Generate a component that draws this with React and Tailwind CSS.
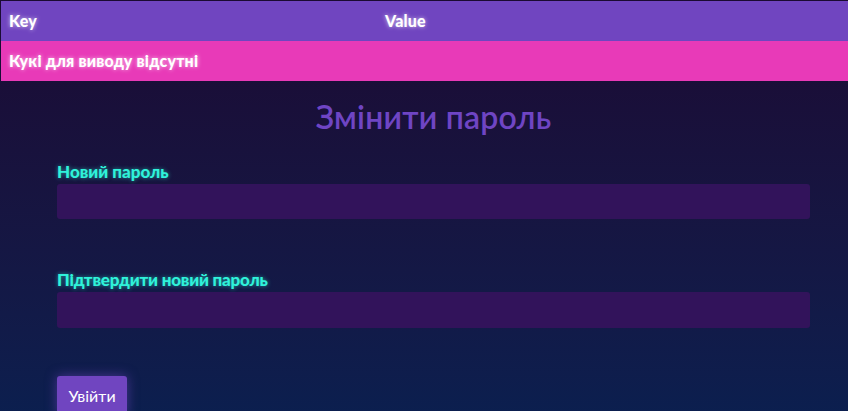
export default function App() {
  return (
    <div className="min-h-screen bg-gradient-to-b from-[#1b0a33] to-[#0b1f4f] font-['Lato','Noto_Sans',sans-serif] pt-px pl-px">
      <table className="w-full border-collapse text-white font-black text-[16px] tracking-[0.2px] [text-shadow:0_0_4px_rgba(255,255,255,0.7)]">
        <thead>
          <tr className="bg-[#7045c0] h-10">
            <th className="w-[376px] text-left px-2 font-black">Key</th>
            <th className="text-left px-2 font-black">Value</th>
          </tr>
        </thead>
        <tbody>
          <tr className="bg-[#e83ab8] h-10">
            <td colSpan={2} className="px-2">Кукі для виводу відсутні</td>
          </tr>
        </tbody>
      </table>

      <div className="ml-[56px] w-[753px] pt-[12px]">
        <h2 className="text-center text-[32px] font-semibold text-[#6f45c4] leading-[48px] tracking-[0.2px]">
          Змінити пароль
        </h2>
        <form className="mt-[21px]">
          <label className="block text-[17px] font-black text-[#2ff2da] leading-5 [text-shadow:0_0_4px_rgba(47,242,218,0.6)]">
            Новий пароль
          </label>
          <input type="password" className="block w-full h-[35px] mt-[2px] rounded-[3px] bg-[#32135b] outline-none" />

          <label className="block mt-[51px] text-[17px] font-black text-[#2ff2da] leading-5 tracking-[-0.2px] [text-shadow:0_0_4px_rgba(47,242,218,0.6)]">
            Підтвердити новий пароль
          </label>
          <input type="password" className="block w-full h-[36px] mt-[2px] rounded-[3px] bg-[#32135b] outline-none" />

          <button type="button" className="mt-[48px] h-[40px] w-[70px] rounded-[3px] bg-[#7045c0] text-white text-[16px] shadow-[0_0_12px_rgba(112,69,192,0.6)]">
            Увійти
          </button>
        </form>
      </div>
    </div>
  );
}
